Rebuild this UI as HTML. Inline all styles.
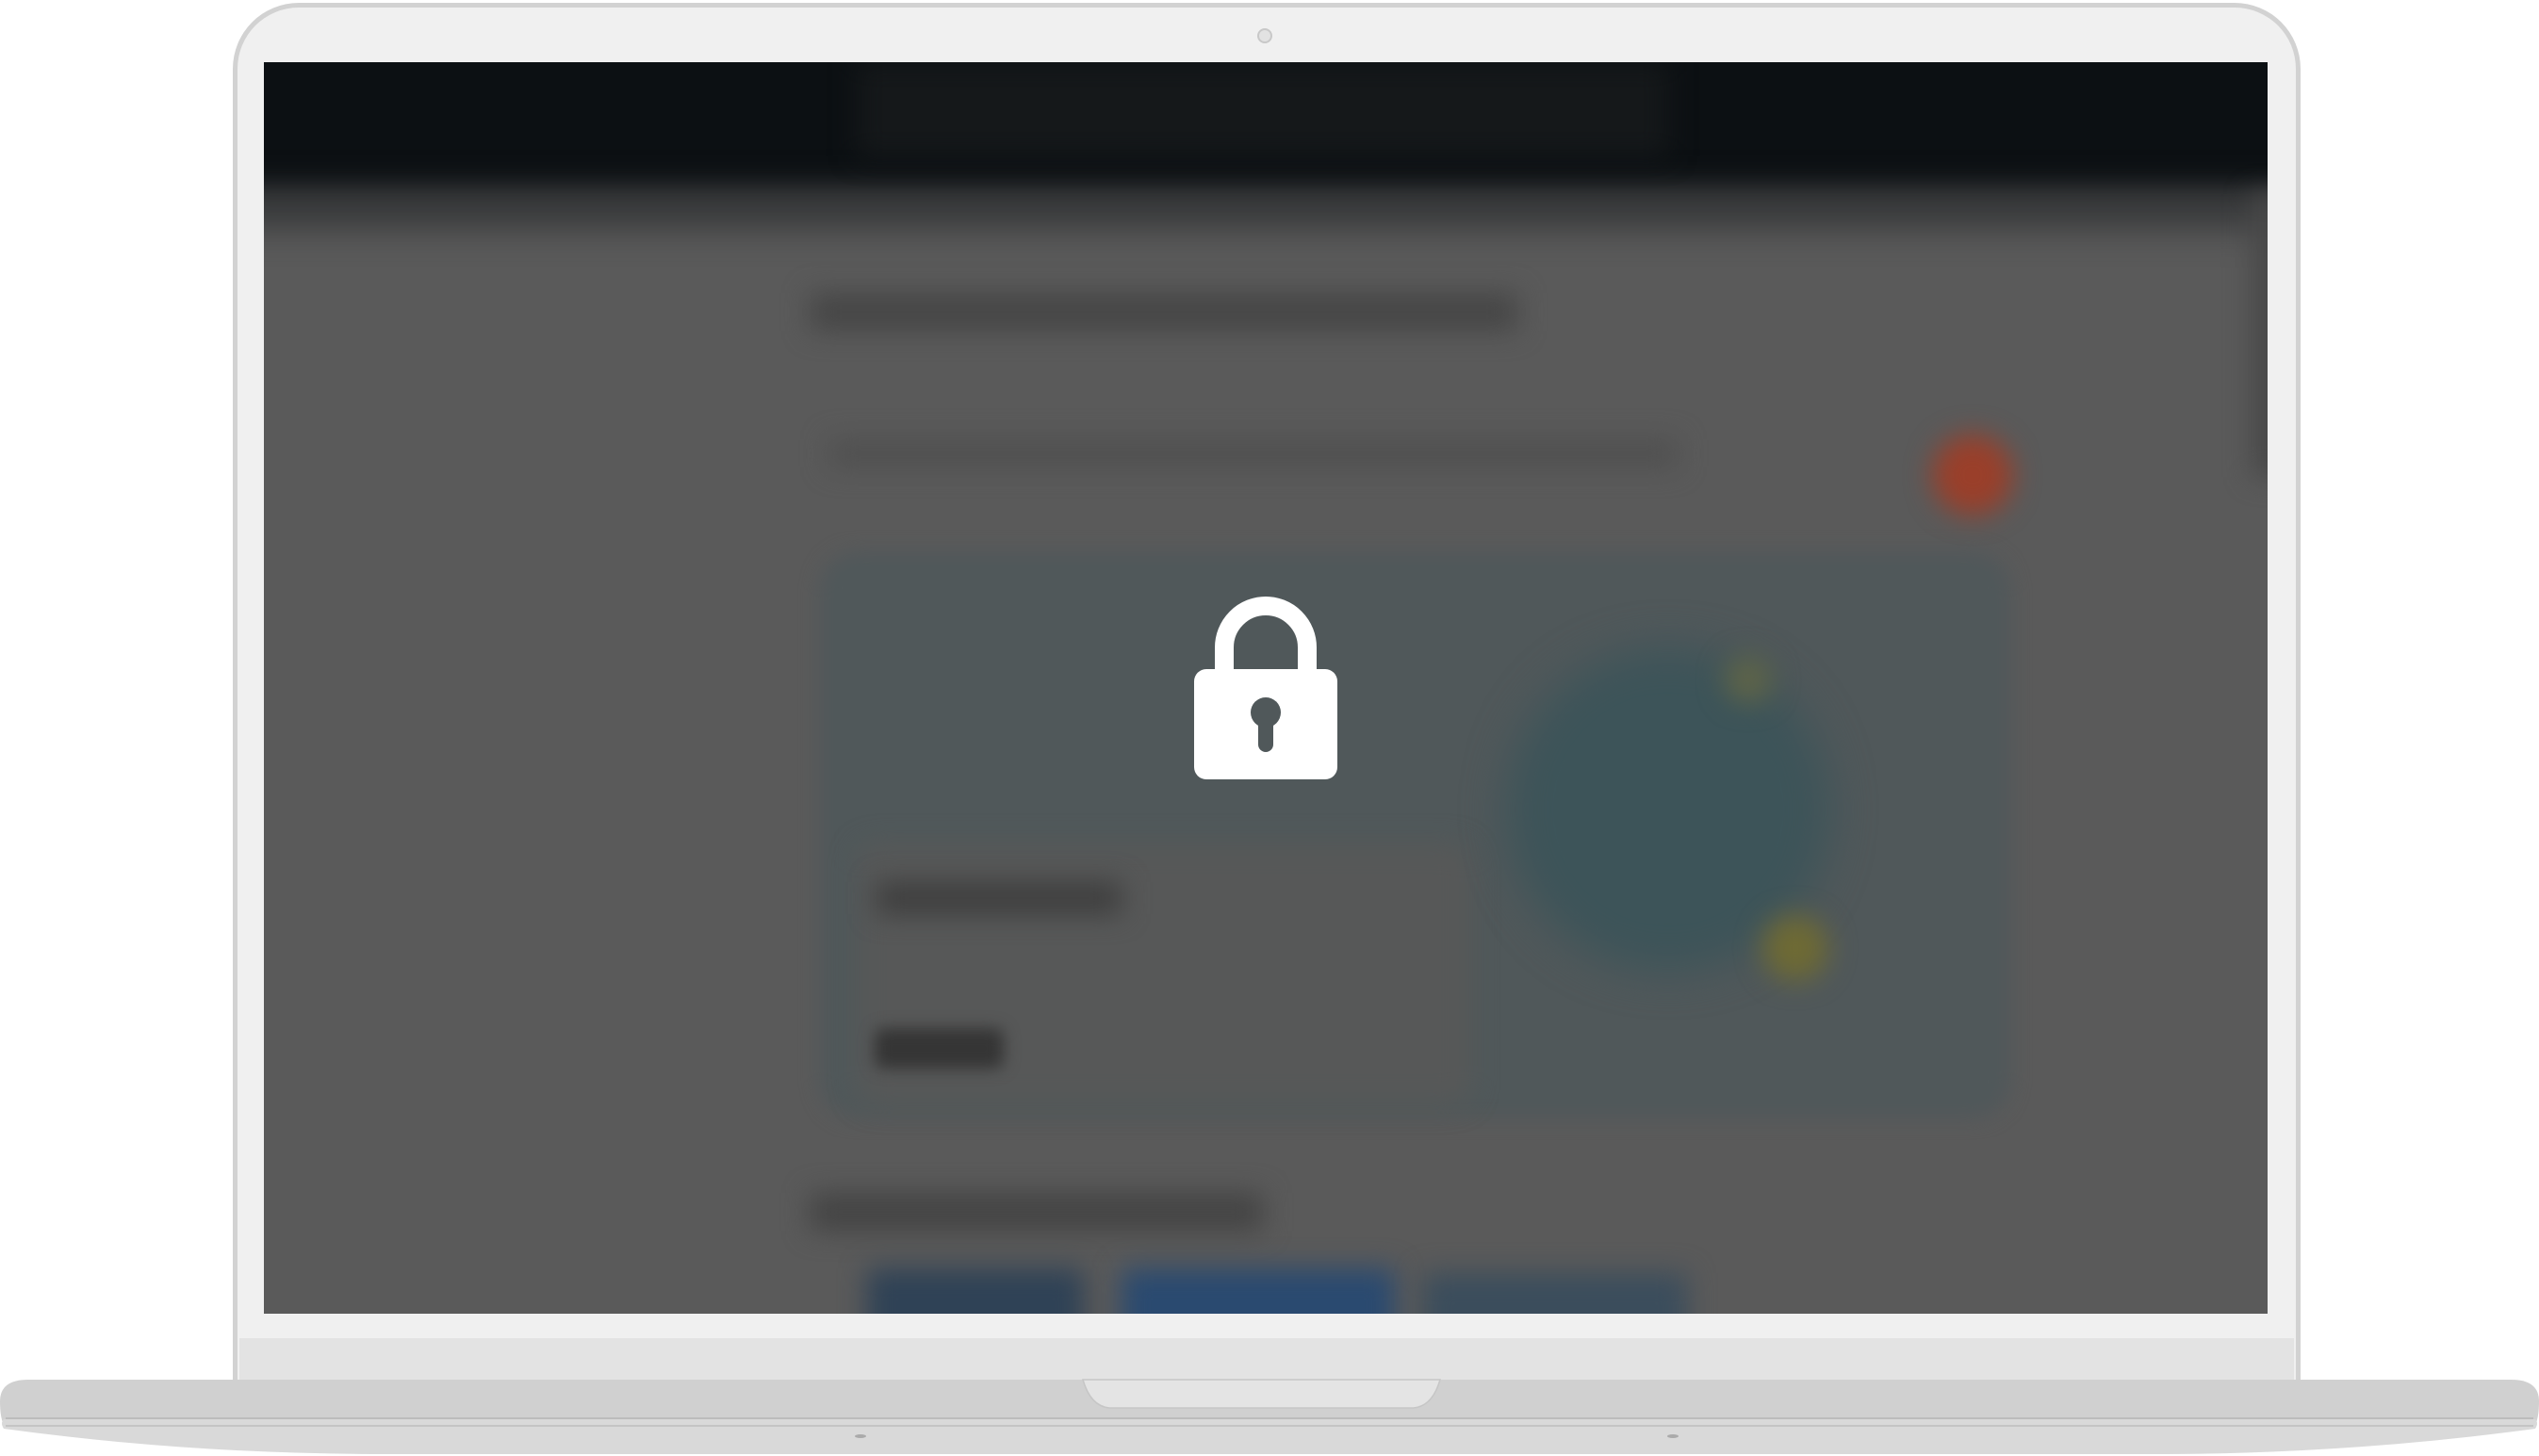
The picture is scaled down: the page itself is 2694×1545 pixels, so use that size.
<!DOCTYPE html>
<html><head><meta charset="utf-8"><style>
html,body{margin:0;padding:0;background:#fff;}
body{width:2694px;height:1545px;position:relative;overflow:hidden;font-family:"Liberation Sans",sans-serif;}
.abs{position:absolute;}
#lid{left:247px;top:3px;width:2194px;height:1475px;background:#f0f0f0;border:5px solid #d2d2d2;border-bottom:none;border-radius:70px 70px 0 0;box-sizing:border-box;}
#chin{left:254px;top:1420px;width:2180px;height:45px;background:#e3e3e3;}
#screen{left:280px;top:66px;width:2126px;height:1328px;background:#5a5a5a;overflow:hidden;}
.b{position:absolute;filter:blur(14px);}
</style></head><body>
<div id="lid" class="abs"></div>
<div id="chin" class="abs"></div>
<div class="abs" style="left:1334px;top:30px;width:12px;height:12px;border-radius:50%;background:#e2e2e2;border:2px solid #c8c8c8;"></div>
<div id="screen" class="abs">
  <div class="b" style="left:-40px;top:-40px;width:2210px;height:180px;background:#0c1013;"></div>
  <div class="b" style="left:-40px;top:140px;width:2210px;height:30px;background:#2a2c2e;filter:blur(20px)"></div>
  <div class="b" style="left:630px;top:0;width:860px;height:100px;background:#15181a;"></div>
  <div class="b" style="left:580px;top:245px;width:750px;height:40px;background:#464646;"></div>
  <div class="b" style="left:600px;top:400px;width:900px;height:30px;background:#505050;"></div>
  <div class="b" style="left:1770px;top:395px;width:86px;height:86px;border-radius:50%;background:#9a3f2a;"></div>
  <div class="b" style="left:590px;top:520px;width:1263px;height:600px;border-radius:40px;background:#50585a;filter:blur(10px)"></div>
  <div class="b" style="left:630px;top:830px;width:650px;height:275px;border-radius:20px;background:#575858;"></div>
  <div class="b" style="left:650px;top:870px;width:260px;height:34px;background:#3e3e3e;"></div>
  <div class="b" style="left:648px;top:1025px;width:137px;height:43px;border-radius:10px;background:#353535;filter:blur(8px)"></div>
  <div class="b" style="left:1318px;top:621px;width:344px;height:344px;border-radius:50%;background:#3d5459;filter:blur(22px)"></div>
  <div class="b" style="left:1590px;top:905px;width:70px;height:70px;border-radius:50%;background:#6e6a34;"></div>
  <div class="b" style="left:1550px;top:630px;width:50px;height:50px;border-radius:50%;background:#5e6448;"></div>
  <div class="b" style="left:580px;top:1200px;width:480px;height:40px;background:#444;"></div>
  <div class="b" style="left:640px;top:1280px;width:230px;height:80px;background:#2f4256;"></div>
  <div class="b" style="left:910px;top:1280px;width:290px;height:80px;background:#2a4a70;"></div>
  <div class="b" style="left:1230px;top:1285px;width:280px;height:80px;background:#3b4d5c;"></div>
  <div class="b" style="left:2110px;top:140px;width:40px;height:300px;background:#484848;"></div>
</div>
<svg class="abs" style="left:1267px;top:623px" width="152" height="204" viewBox="0 -10 152 204">
  <path d="M32 82 V54 A44 44 0 0 1 120 54 V82" fill="none" stroke="#fff" stroke-width="20"/>
  <rect x="0" y="77" width="152" height="117" rx="13" fill="#fff"/>
  <circle cx="76" cy="123" r="16" fill="#50585a"/>
  <rect x="68" y="123" width="16" height="42" rx="8" fill="#50585a"/>
</svg>
<svg class="abs" style="left:0;top:1462px" width="2694" height="83" viewBox="0 0 2694 83">
  <path d="M30 2 H2664 Q2694 2 2694 25 Q2694 42 2690 50 Q2500 78 2300 80 H394 Q194 78 4 50 Q0 42 0 25 Q0 2 30 2 Z" fill="#d0d0d0"/>
  <path d="M4 44 H2690 Q2694 48 2690 54 Q2500 80 2300 81 H394 Q194 80 4 54 Q0 48 4 44 Z" fill="#d9d9d9"/>
  <line x1="6" y1="43" x2="2688" y2="43" stroke="#bcbcbc" stroke-width="2"/>
  <line x1="6" y1="51" x2="2688" y2="51" stroke="#c4c4c4" stroke-width="2"/>
  <path d="M1149 2 H1528 Q1520 30 1500 32 H1177 Q1157 30 1149 2 Z" fill="#e4e4e4" stroke="#c6c6c6" stroke-width="1.5"/>
  <ellipse cx="913" cy="62" rx="6" ry="2" fill="#aaa"/>
  <ellipse cx="1775" cy="62" rx="6" ry="2" fill="#aaa"/>
</svg>
</body></html>
